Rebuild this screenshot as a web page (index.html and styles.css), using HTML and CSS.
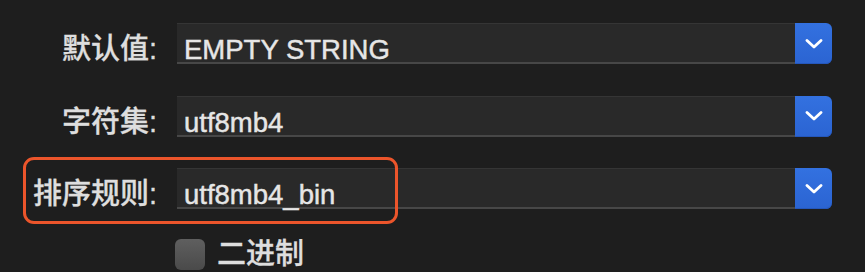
FILE: index.html
```html
<!DOCTYPE html>
<html lang="zh-CN">
<head>
    <meta charset="UTF-8">
    <title>字段属性</title>
    <link rel="stylesheet" href="styles.css">
</head>
<body>
    <div class="panel">
        <div class="row">
            <label class="label">默认值:</label>
            <div class="select">
                <span class="value">EMPTY STRING</span>
            </div>
            <span class="arrow"><svg width="18" height="10" viewBox="0 0 18 10"><polyline points="2,1.5 9,8 16,1.5" fill="none" stroke="#fff" stroke-width="2.8" stroke-linecap="round" stroke-linejoin="round"/></svg></span>
        </div>
        <div class="row">
            <label class="label">字符集:</label>
            <div class="select">
                <span class="value">utf8mb4</span>
            </div>
            <span class="arrow"><svg width="18" height="10" viewBox="0 0 18 10"><polyline points="2,1.5 9,8 16,1.5" fill="none" stroke="#fff" stroke-width="2.8" stroke-linecap="round" stroke-linejoin="round"/></svg></span>
        </div>
        <div class="row">
            <label class="label">排序规则:</label>
            <div class="select">
                <span class="value">utf8mb4_bin</span>
            </div>
            <span class="arrow"><svg width="18" height="10" viewBox="0 0 18 10"><polyline points="2,1.5 9,8 16,1.5" fill="none" stroke="#fff" stroke-width="2.8" stroke-linecap="round" stroke-linejoin="round"/></svg></span>
        </div>
        <div class="check-row">
            <span class="checkbox"></span>
            <span class="check-text">二进制</span>
        </div>
        <!-- 标注框 -->
        <div class="mark"></div>
    </div>
</body>
</html>
```

FILE: styles.css
```css
html, body {
    margin: 0;
    height: 100%;
    background-color: #1e1e1e;
    overflow: hidden;
}
body {
    font-family: "Liberation Sans", "Noto Sans CJK SC", sans-serif;
    color: #dedede;
}
.panel {
    position: relative;
    display: flex;
    flex-direction: column;
    gap: 31.5px;
    padding: 23px 33px 0 0;
}
.row {
    display: flex;
    height: 41px;
}
.label {
    width: 157px;
    margin-right: 20px;
    flex-shrink: 0;
    text-align: right;
    font-size: 29px;
    font-weight: 500;
    line-height: 30px;
    padding-top: 11px;
    box-sizing: border-box;
    white-space: nowrap;
    -webkit-text-stroke: 0.3px #dedede;
}
.select {
    flex: 1;
    height: 41px;
    box-sizing: border-box;
    background-color: #292929;
    border-top: 1px solid #353535;
    border-bottom: 2px solid #474747;
    padding: 11px 0 0 7px;
}
.value {
    font-size: 27.5px;
    line-height: 30px;
    color: #e6e6e6;
    -webkit-text-stroke: 0.45px #e6e6e6;
}
.arrow {
    width: 37px;
    height: 41px;
    display: flex;
    align-items: center;
    justify-content: center;
    background: linear-gradient(#3371e0, #2b64d2);
    border-radius: 0 6px 6px 0;
    box-shadow: inset 0 -1px 0 #2557bb;
}
.check-row {
    display: flex;
    align-items: center;
    margin-top: -2px;
    padding-left: 175px;
    height: 31px;
}
.checkbox {
    width: 30px;
    height: 31px;
    border-radius: 6px;
    background: linear-gradient(#5f5f5f, #4a4a4a);
    margin-right: 12px;
}
.check-text {
    font-size: 29px;
    font-weight: 500;
    line-height: 30px;
    -webkit-text-stroke: 0.3px #dedede;
}
.mark {
    position: absolute;
    left: 23px;
    top: 157px;
    width: 375px;
    height: 67px;
    box-sizing: border-box;
    border: 3.5px solid #ec552b;
    border-radius: 11px;
}
```
